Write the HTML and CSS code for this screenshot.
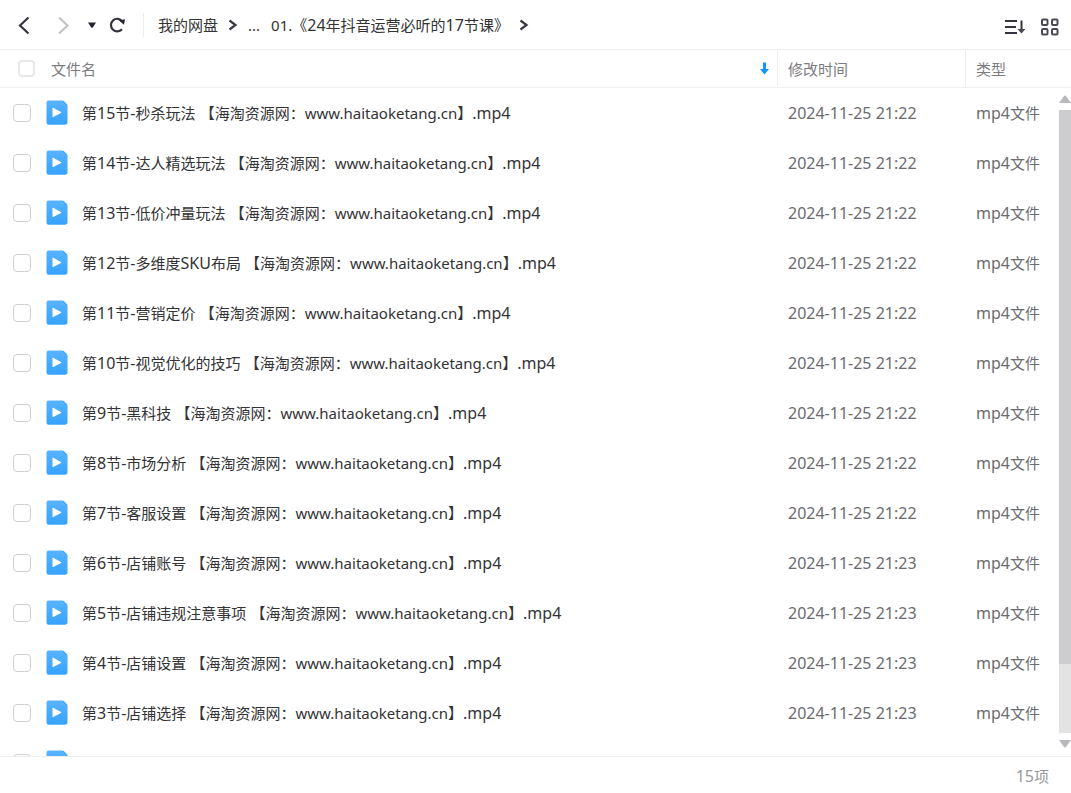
FILE: index.html
```
<!DOCTYPE html>
<html lang="zh-CN">
<head>
<meta charset="utf-8">
<title>我的网盘</title>
<link rel="stylesheet" href="styles.css">
</head>
<body>
<svg class="defs" aria-hidden="true">
  <symbol id="video" viewBox="0 0 22 26">
    <path d="M2.500 0.500H14.500L21.500 7V22a2.800 2.800 0 0 1-2.800 2.800H3a2.500 2.500 0 0 1-2.500-2.500V2.500a2 2 0 0 1 2-2z" fill="url(#blue)"/>
    <path d="M14.500.5h1.500q1.200 0 2 .8l2.500 2.500q1 1 1 2.200V7.500z" fill="#45a5f7"/>
    <path d="M6.500 8.300v8.200q0 .9.800.5l7.600-4q.8-.5 0-1L7.300 7.800q-.8-.4-.8.500z" fill="#fff"/>
  </symbol>
  <linearGradient id="blue" x1="0" y1="0" x2="0" y2="1"><stop offset="0" stop-color="#58b3ff"/><stop offset="1" stop-color="#36a3fd"/></linearGradient>
</svg>
<div class="app">
  <header class="toolbar">
    <div class="nav">
      <button class="icon-btn back" aria-label="后退"><svg width="14" height="20" viewBox="0 0 14 20"><path d="M11.500 2.500 3 10.500l8.500 8" fill="none" stroke="#34343f" stroke-width="2.200"/></svg></button>
      <button class="icon-btn forward" aria-label="前进"><svg width="14" height="20" viewBox="0 0 14 20"><path d="M2 2.500l8.500 8-8.500 8" fill="none" stroke="#c3c3c6" stroke-width="2.200"/></svg></button>
      <button class="icon-btn history" aria-label="历史"><svg width="8" height="6" viewBox="0 0 8 6"><path d="M0 .5h8L5 5.300q-1 1-2 0z" fill="#25252f"/></svg></button>
      <button class="icon-btn" aria-label="刷新"><svg width="17" height="16" viewBox="0 0 17 16"><path d="M13.300 4.300A6.300 6.300 0 1 0 13 12.200" fill="none" stroke="#34343f" stroke-width="2.200"/><path d="M10 3.500l6-1.300-1 5.500z" fill="#25252f"/></svg></button>
    </div>
    <nav class="crumbs" aria-label="路径">
      <a href="#">我的网盘</a>
      <svg class="chev" width="10" height="12" viewBox="0 0 10 12"><path d="M1.500 1.500 7.500 6l-6 4.500" fill="none" stroke="#3a3a45" stroke-width="2.200"/></svg>
      <a href="#">...</a>
      <a class="current" href="#">01.《<span class="latin">24</span>年抖音运营必听的<span class="latin">17</span>节课》</a>
      <svg class="chev" width="10" height="12" viewBox="0 0 10 12"><path d="M1.500 1.500 7.500 6l-6 4.500" fill="none" stroke="#3a3a45" stroke-width="2.200"/></svg>
    </nav>
    <div class="views">
      <button class="icon-btn" aria-label="排序"><svg width="20" height="16" viewBox="0 0 20 16"><path d="M0 2h12M0 8h11M0 14h12M16.500 1.500V13" fill="none" stroke="#34343f" stroke-width="2"/><path d="M12.500 10h8l-4 4.500z" fill="#4a4a55"/></svg></button>
      <button class="icon-btn" aria-label="网格视图"><svg width="18" height="18" viewBox="0 0 18 18" fill="none" stroke="#4a4a55" stroke-width="2"><rect x="1" y="1.500" width="5.500" height="5.500" rx="1"/><rect x="11" y="1.500" width="5.500" height="5.500" rx="1"/><rect x="1" y="11" width="5.500" height="5.500" rx="1"/><rect x="11" y="11" width="5.500" height="5.500" rx="1"/></svg></button>
    </div>
  </header>
  <main class="listing">
    <table class="files">
      <thead>
        <tr>
          <th class="name"><input type="checkbox" aria-label="全选"><span>文件名</span><svg class="sort" width="9" height="13" viewBox="0 0 9 13"><path d="M3 .5h3v6.500h3L4.500 12.500 0 7h3z" fill="#1296ff"/></svg></th>
          <th class="time">修改时间</th>
          <th class="type">类型</th>
        </tr>
      </thead>
      <tbody id="rows"></tbody>
    </table>
    <div class="scrollbar" aria-hidden="true">
      <svg width="12" height="8" viewBox="0 0 12 8"><path d="M0 8 5 1q1-1 2 0l5 7z" fill="#b7b9bd"/></svg>
      <div class="track"><div class="thumb"></div></div>
      <svg width="12" height="8" viewBox="0 0 12 8"><path d="M0 0l5 7q1 1 2 0l5-7z" fill="#b7b9bd"/></svg>
    </div>
  </main>
  <footer class="status"><span class="latin">15</span>项</footer>
</div>
<script src="files.js"></script>
</body>
</html>
```
FILE: styles.css
```
* { box-sizing: border-box; }
body {
  margin: 0;
  background: #fff;
  color: #333336;
  font: 15px/20px "Noto Sans", "Noto Sans CJK SC", sans-serif;
}
.defs { position: absolute; width: 0; height: 0; }
.app { display: flex; flex-direction: column; height: 100vh; }
.toolbar {
  display: flex;
  align-items: center;
  flex: none;
  height: 50px;
  padding: 0 12px 0 17px;
  border-bottom: 1px solid #ededef;
}
.icon-btn { display: flex; padding: 0; border: 0; background: none; }
.nav { display: flex; align-items: center; height: 24px; padding-right: 17px; border-right: 1px solid #ededef; }
.back { margin-right: 26px; }
.forward { margin-right: 17px; }
.history { margin-right: 13px; }
.crumbs { display: flex; align-items: center; flex: 1; padding-left: 14px; }
.crumbs a { color: inherit; text-decoration: none; white-space: nowrap; }
.chev { margin: 0 10px; }
.current { margin-left: 11px; }
.views { display: flex; align-items: center; gap: 16px; padding-top: 4px; }
.listing { display: flex; flex: 1; min-height: 0; position: relative; }
.files { display: flex; flex-direction: column; flex: 1; min-width: 0; }
thead { display: block; flex: none; border-bottom: 1px solid #f0f0f2; }
tbody { display: block; flex: 1; min-height: 0; overflow: hidden; }
tr { display: grid; grid-template-columns: minmax(0, 1fr) 188px 106px; }
th, td { display: flex; align-items: center; padding: 0 0 0 10px; white-space: nowrap; }
th { height: 37px; color: #7c7c80; font-weight: 400; }
th.name { padding-left: 18px; }
.time, .type { color: #6b6b70; }
th.time, th.type { border-left: 1px solid #ededef; color: #7c7c80; }
td { height: 50px; }
td.name { padding-left: 13px; }
td.time, td.type { padding-left: 11px; }
td.time, .latin { font-size: 16px; }
input {
  appearance: none;
  flex: none;
  width: 18px;
  height: 18px;
  margin: 0;
  border: 1px solid #d0d0d4;
  border-radius: 4px;
  background: #fff;
}
th input { width: 17px; height: 17px; margin-right: 16px; border: 2px solid #e8e8ea; }
.sort { margin-left: auto; margin-right: 8px; }
.file-icon { flex: none; margin: 0 14px 0 15px; }
.scrollbar {
  position: absolute;
  top: 45px;
  right: 0;
  bottom: 8px;
  display: flex;
  flex-direction: column;
  gap: 7px;
  width: 12px;
}
.scrollbar svg { flex: none; }
.track { flex: 1; background: #e3e3e4; }
.thumb { height: 89%; background: #cdcdcf; }
.status {
  flex: none;
  height: 37px;
  padding: 9px 22px 0 0;
  border-top: 1px solid #ededef;
  color: #98989d;
  text-align: right;
}
```
FILE: files.js
```
const lessons = [
  ["15", "秒杀玩法", "21:22"],
  ["14", "达人精选玩法", "21:22"],
  ["13", "低价冲量玩法", "21:22"],
  ["12", "多维度SKU布局", "21:22"],
  ["11", "营销定价", "21:22"],
  ["10", "视觉优化的技巧", "21:22"],
  ["9", "黑科技", "21:22"],
  ["8", "市场分析", "21:22"],
  ["7", "客服设置", "21:22"],
  ["6", "店铺账号", "21:23"],
  ["5", "店铺违规注意事项", "21:23"],
  ["4", "店铺设置", "21:23"],
  ["3", "店铺选择", "21:23"],
  ["", "", ""]
];
const latin = text => `<span class="latin">${text}</span>`;
document.getElementById("rows").innerHTML = lessons.map(([number, title, time], i) => `
  <tr>
    <td class="name"><input type="checkbox" id="f${i}" aria-label="选择"><svg class="file-icon" width="22" height="26"><use href="#video"/></svg>${title ? `<label for="f${i}">第${latin(number)}节${latin("-")}${title.replace("SKU", latin("SKU"))}${latin(" ")}【海淘资源网：www.haitaoketang.cn】${latin(".mp4")}</label>` : ""}</td>
    <td class="time">${time ? "2024-11-25 " + time : ""}</td>
    <td class="type">${time ? `<span>${latin("mp4")}文件</span>` : ""}</td>
  </tr>`).join("");
```
